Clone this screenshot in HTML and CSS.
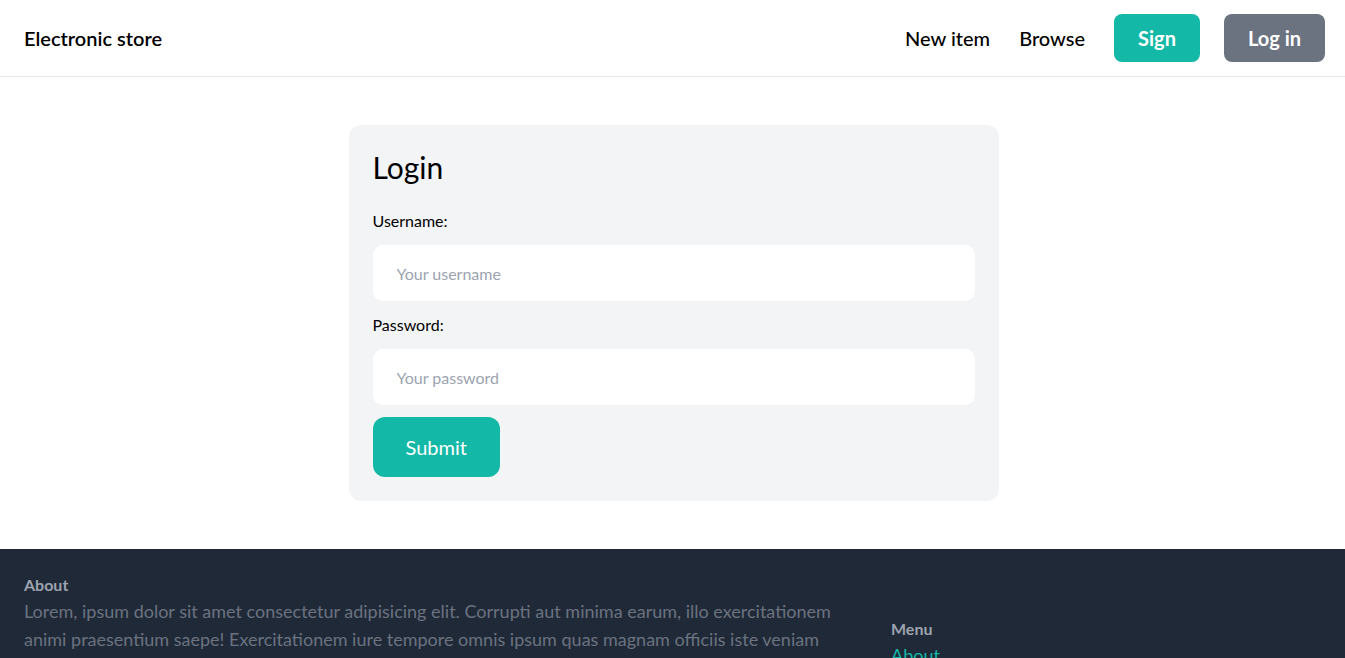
FILE: index.html
```html
<!DOCTYPE html>
<html lang="en">
<head>
<meta charset="utf-8">
<title>Electronic store</title>
<link rel="stylesheet" href="styles.css">
</head>
<body>
<header class="topbar">
  <a class="brand" href="#">Electronic store</a>
  <nav class="nav">
    <a class="nav-link" href="#">New item</a>
    <a class="nav-link" href="#">Browse</a>
    <a class="btn btn-teal" href="#">Sign</a>
    <a class="btn btn-gray" href="#">Log in</a>
  </nav>
</header>
<main class="main">
  <form class="card">
    <h1 class="card-title">Login</h1>
    <label class="label" for="username">Username:</label>
    <input class="input" id="username" type="text" placeholder="Your username">
    <label class="label" for="password">Password:</label>
    <input class="input" id="password" type="password" placeholder="Your password">
    <button class="submit" type="button">Submit</button>
  </form>
</main>
<footer class="footer">
  <div class="footer-about">
    <h3 class="footer-heading">About</h3>
    <p class="footer-text">Lorem, ipsum dolor sit amet consectetur adipisicing elit. Corrupti aut minima earum, illo exercitationem animi praesentium saepe! Exercitationem iure tempore omnis ipsum quas magnam officiis iste veniam</p>
  </div>
  <div class="footer-menu">
    <h3 class="footer-heading">Menu</h3>
    <a class="footer-link" href="#">About</a>
  </div>
</footer>
</body>
</html>
```

FILE: styles.css
```css
* { box-sizing: border-box; }
html, body { margin: 0; padding: 0; }
body {
  font-family: Lato, "Open Sans", sans-serif;
  color: #000;
  background: #fff;
}
a { text-decoration: none; color: inherit; }

.topbar {
  height: 77px;
  display: flex;
  align-items: center;
  justify-content: space-between;
  padding: 0 20px 0 24px;
  border-bottom: 1px solid #e5e7eb;
}
.brand {
  font-size: 20px;
  font-weight: 600;
  color: #000;
}
.nav {
  display: flex;
  align-items: center;
}
.nav-link {
  font-size: 20px;
  font-weight: 500;
  margin-right: 29px;
}
.btn {
  display: flex;
  align-items: center;
  height: 48px;
  padding: 0 24px;
  border-radius: 8px;
  font-size: 20px;
  font-weight: 700;
  color: #fff;
}
.btn-teal { background: #14b8a6; margin-right: 24px; }
.btn-gray { background: #6b7280; }

.main { padding: 48px 0 48px 2px; }
.card {
  width: 650px;
  margin: 0 auto;
  padding: 24px;
  background: #f3f4f6;
  border-radius: 12px;
  display: flex;
  flex-direction: column;
  align-items: flex-start;
}
.card-title {
  margin: 0 0 24px;
  font-size: 30px;
  line-height: 36px;
  font-weight: 400;
}
.label {
  font-size: 16px;
  line-height: 24px;
  margin-bottom: 12px;
}
.input {
  width: 100%;
  height: 56px;
  border: none;
  outline: none;
  border-radius: 10px;
  background: #fff;
  padding: 0 24px;
  font-family: inherit;
  font-size: 16px;
  margin-bottom: 12px;
}
.input::placeholder { color: #9ca3af; }
.submit {
  height: 60px;
  padding: 0 33px;
  border: none;
  border-radius: 12px;
  background: #14b8a6;
  color: #fff;
  font-family: inherit;
  font-size: 20px;
}

.footer {
  background: #1f2937;
  display: flex;
  padding: 24px 24px 24px;
  min-height: 200px;
}
.footer-about { width: 864px; flex: none; padding-right: 30px; }
.footer-menu { padding-top: 44px; padding-left: 3px; display: flex; flex-direction: column; }
.footer-heading {
  margin: 0;
  font-size: 16px;
  line-height: 24px;
  font-weight: 700;
  color: #9ca3af;
}
.footer-text {
  margin: 0;
  font-size: 18px;
  line-height: 28px;
  color: #6b7280;
}
.footer-link {
  font-size: 18px;
  line-height: 28px;
  color: #14b8a6;
}
```
